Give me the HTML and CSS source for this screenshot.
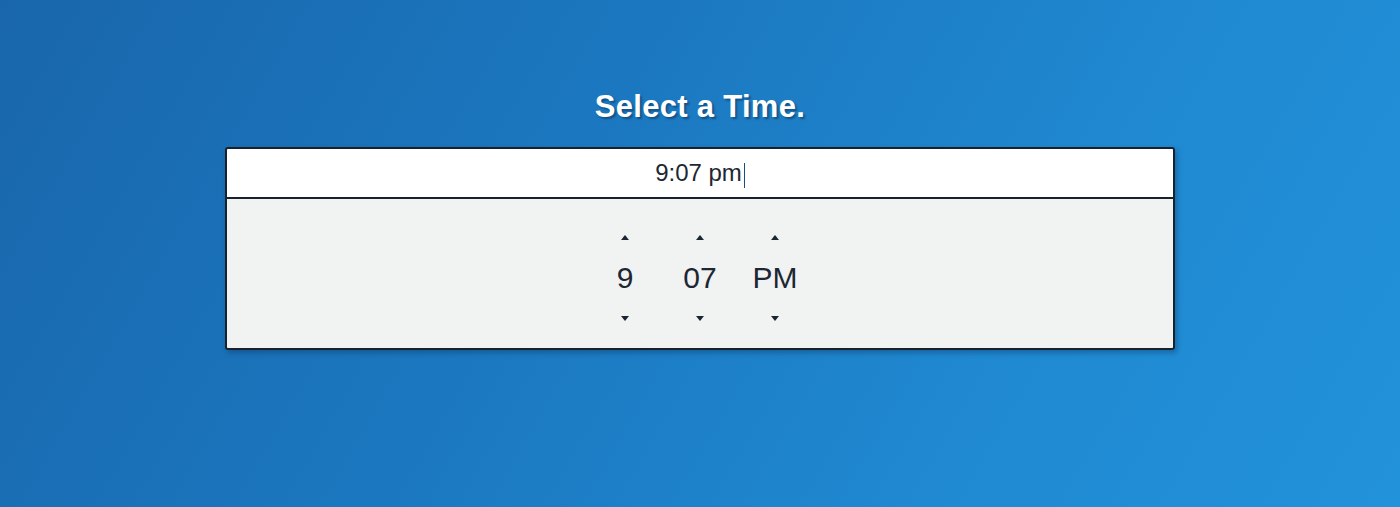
FILE: index.html
```html
<!DOCTYPE html>
<html lang="en">
<head>
<meta charset="utf-8">
<title>Select a Time</title>
<link rel="stylesheet" href="styles.css">
</head>
<body>
<main class="page">
  <h1 class="title">Select a Time.</h1>
  <div class="picker">
    <div class="field"><span class="value">9:07 pm</span><span class="caret"></span></div>
    <div class="spinners">
      <div class="spin">
        <button class="arrow up" aria-label="Increase hour"></button>
        <span class="num">9</span>
        <button class="arrow down" aria-label="Decrease hour"></button>
      </div>
      <div class="spin">
        <button class="arrow up" aria-label="Increase minute"></button>
        <span class="num">07</span>
        <button class="arrow down" aria-label="Decrease minute"></button>
      </div>
      <div class="spin">
        <button class="arrow up" aria-label="Toggle period"></button>
        <span class="num">PM</span>
        <button class="arrow down" aria-label="Toggle period"></button>
      </div>
    </div>
  </div>
</main>
</body>
</html>
```
FILE: styles.css
```css
html, body {
  margin: 0;
  padding: 0;
}
body {
  height: 507px;
  overflow: hidden;
  font-family: "Liberation Sans", Arial, sans-serif;
  background: linear-gradient(120deg, #1966ab 0%, #1b78c0 40%, #1f88d0 70%, #2292db 100%);
}
.page {
  display: flex;
  flex-direction: column;
  align-items: center;
  padding-top: 89px;
}
.title {
  margin: 0 0 22px;
  font-size: 31px;
  line-height: 36px;
  font-weight: bold;
  color: #ffffff;
  letter-spacing: 0.3px;
  text-shadow: 2px 2px 2px rgba(8, 30, 60, 0.45);
}
.picker {
  width: 950px;
  box-sizing: border-box;
  border: 2px solid #17222d;
  border-radius: 3px;
  overflow: hidden;
  box-shadow: 2px 3px 5px rgba(10, 40, 80, 0.35);
}
.field {
  height: 48px;
  background: #ffffff;
  border-bottom: 2px solid #17222d;
  display: flex;
  justify-content: center;
  align-items: center;
  color: #1e2833;
  font-size: 24px;
  line-height: 48px;
}
.caret {
  display: inline-block;
  width: 1px;
  height: 25px;
  margin-left: 2px;
  margin-top: 4px;
  background: #1d4a80;
}
.spinners {
  background: #f1f2f2;
  display: flex;
  justify-content: center;
  padding: 36px 0 27px;
}
.spin {
  width: 75px;
  display: flex;
  flex-direction: column;
  align-items: center;
}
.arrow {
  padding: 0;
  margin: 0;
  width: 0;
  height: 0;
  border: 0 solid transparent;
  border-left-width: 4.5px;
  border-right-width: 4.5px;
  background: none;
  cursor: pointer;
}
.arrow.up {
  border-bottom: 5px solid #1c2632;
}
.arrow.down {
  border-top: 5px solid #1c2632;
}
.num {
  margin: 23px 0;
  font-size: 30px;
  line-height: 30px;
  color: #1c2733;
}
```
